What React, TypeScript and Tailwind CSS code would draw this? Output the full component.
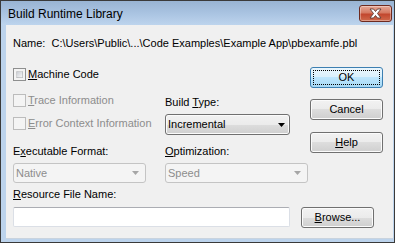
import React from 'react';

const btnFace =
  'bg-[linear-gradient(to_bottom,#f2f2f2_0%,#ebebeb_50%,#dddddd_50%,#cfcfcf_100%)] border border-[#707070] rounded-[3px] shadow-[inset_0_0_0_1px_#fbfbfb]';

const Check: React.FC<{ label: React.ReactNode; disabled?: boolean }> = ({ label, disabled }) => (
  <div className="flex items-center h-[13px] gap-[2px]">
    <div
      className={`w-[13px] h-[13px] shrink-0 border p-[2px] ${
        disabled ? 'border-[#bcbcbc] bg-[#f4f4f4]' : 'border-[#8e8f8f] bg-[#f4f4f4]'
      }`}
    >
      <div
        className={`w-full h-full ${
          disabled
            ? 'bg-[#f4f4f4]'
            : 'bg-[linear-gradient(135deg,#cbcfd5_0%,#f6f6f6_100%)] border border-[#a9a9a9]/40'
        }`}
      />
    </div>
    <span className={`leading-[13px] ${disabled ? 'text-[#8d8d8d]' : 'text-black'}`}>{label}</span>
  </div>
);

const Arrow: React.FC<{ color: string }> = ({ color }) => (
  <svg width="7" height="4" viewBox="0 0 7 4" className="shrink-0">
    <polygon points="0,0 7,0 3.5,4" fill={color} />
  </svg>
);

const Combo: React.FC<{ value: string; disabled?: boolean; className: string }> = ({
  value,
  disabled,
  className,
}) => (
  <div
    className={`flex items-center justify-between rounded-[3px] border ${
      disabled
        ? 'border-[#c4c4c4] bg-[#f4f4f4] text-[#8d8d8d] pl-[2px] pr-[6px]'
        : `${btnFace} text-black pl-[2px] pr-[4px]`
    } ${className}`}
  >
    <span className="leading-[13px]">{value}</span>
    <Arrow color={disabled ? '#a6a6a6' : '#000000'} />
  </div>
);

const App: React.FC = () => {
  return (
    <div className="w-[395px] h-[243px] flex flex-col border border-[#3a3a3a] bg-[#bcd3ec] font-['Liberation_Sans',Arial,sans-serif] text-[11px] text-black overflow-hidden">
      {/* title bar */}
      <div className="h-[24px] shrink-0 flex justify-between bg-[linear-gradient(to_bottom,#99b4d3_0%,#a9c3e1_50%,#bdd4ed_100%)]">
        <div className="pl-[7px] pt-[6px] text-[12px] leading-[14px] text-black">Build Runtime Library</div>
        <div className="mt-[4px] mr-[2px] w-[33px] h-[17px] rounded-[3px] border border-[#6e2a1f] bg-[linear-gradient(to_bottom,#e6a897_0%,#d57a62_45%,#c2472e_55%,#cf6a4c_100%)] shadow-[inset_0_0_0_1px_rgba(255,255,255,0.35)] flex items-center justify-center">
          <svg width="13" height="11" viewBox="0 0 13 11">
            <polygon
              points="1,1 4.5,1 6.5,3.5 8.5,1 12,1 8.5,5.5 12,10 8.5,10 6.5,7.5 4.5,10 1,10 4.5,5.5"
              fill="#ffffff"
              stroke="#5c3a33"
              strokeWidth="0.9"
              strokeLinejoin="round"
            />
          </svg>
        </div>
      </div>

      {/* client area */}
      <div className="ml-[5px] mr-[1px] h-[214px] shrink-0 bg-[#f0f0f0] border-b border-[#c9d3de] pl-[7px] flex flex-col">
        <div className="mt-[12px] leading-[13px] whitespace-pre">
          Name:  C:\Users\Public\...\Code Examples\Example App\pbexamfe.pbl
        </div>

        <div className="mt-[17px] flex">
          <div className="w-[297px] flex flex-col">
            <div className="flex">
              <div className="w-[152px] flex flex-col">
                <div className="mt-[1px]">
                  <Check label={<><u>M</u>achine Code</>} />
                </div>
                <div className="mt-[13px]">
                  <Check disabled label={<><u>T</u>race Information</>} />
                </div>
                <div className="mt-[10px]">
                  <Check disabled label={<><u>E</u>rror Context Information</>} />
                </div>
              </div>
              <div className="w-[125px] flex flex-col">
                <div className="mt-[29px] leading-[13px]">
                  Build <u>T</u>ype:
                </div>
                <Combo value="Incremental" className="mt-[5px] h-[21px] w-[125px]" />
              </div>
            </div>
            <div className="mt-[10px] flex leading-[13px]">
              <div className="w-[152px]">
                E<u>x</u>ecutable Format:
              </div>
              <div>
                <u>O</u>ptimization:
              </div>
            </div>
          </div>

          <div className="w-[73px] flex flex-col">
            <div className="h-[21px] rounded-[3px] border border-[#3c7fb1] bg-[linear-gradient(to_bottom,#eaf6fd_0%,#d9f0fc_50%,#bee6fd_50%,#a7d9f5_100%)] p-[2px] flex">
              <div className="flex-1 border border-dotted border-black flex items-center justify-center leading-[13px]">
                OK
              </div>
            </div>
            <div className={`mt-[11px] h-[21px] ${btnFace} flex items-center justify-center leading-[13px]`}>
              Cancel
            </div>
            <div className={`mt-[12px] h-[21px] ${btnFace} flex items-center justify-center leading-[13px]`}>
              <span>
                <u>H</u>elp
              </span>
            </div>
          </div>
        </div>

        <div className="mt-[5px] flex">
          <Combo disabled value="Native" className="h-[20px] w-[133px]" />
          <Combo disabled value="Speed" className="ml-[19px] h-[20px] w-[143px]" />
        </div>

        <div className="mt-[5px] leading-[13px]">
          <u>R</u>esource File Name:
        </div>

        <div className="mt-[6px] flex">
          <div className="w-[277px] h-[20px] rounded-[2px] border border-[#dbdfe6] border-t-[#abadb3] bg-white" />
          <div className={`ml-[11px] w-[73px] h-[21px] ${btnFace} flex items-center justify-center leading-[13px]`}>
            <span>
              <u>B</u>rowse...
            </span>
          </div>
        </div>
      </div>
    </div>
  );
};

export default App;
